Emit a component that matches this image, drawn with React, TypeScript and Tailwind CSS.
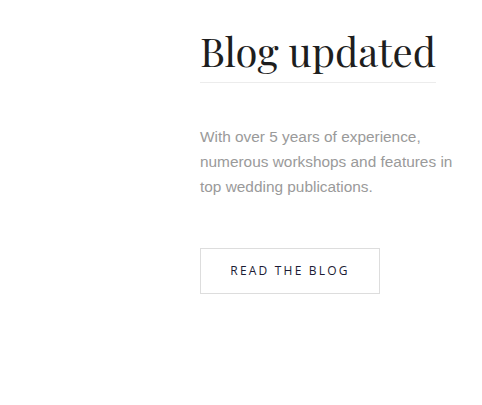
export default function App() {
  return (
    <div className="w-[482px] h-[405px] bg-white">
      <div className="pl-[200px] pt-[26px] w-[470px]">
        <h2
          className="inline-block text-[40px] leading-[50px] text-[#1e1e1e] pb-[6px] border-b border-[#ececec]"
          style={{ fontFamily: '"Playfair Display", "Liberation Serif", serif' }}
        >
          Blog updated
        </h2>
        <p
          className="mt-[41px] text-[15.4px] leading-[25px] text-[#9a9a9a]"
          style={{ fontFamily: '"Liberation Sans", Arial, sans-serif' }}
        >
          With over 5 years of experience, numerous workshops and features in top wedding publications.
        </p>
        <div className="mt-[49px]">
          <a
            href="#"
            className="flex items-center justify-center w-[180px] h-[46px] border border-[#dddddd] text-[12px] tracking-[2.2px] text-[#1b1b34] uppercase"
            style={{ fontFamily: '"Open Sans", sans-serif' }}
          >
            Read the blog
          </a>
        </div>
      </div>
    </div>
  );
}
